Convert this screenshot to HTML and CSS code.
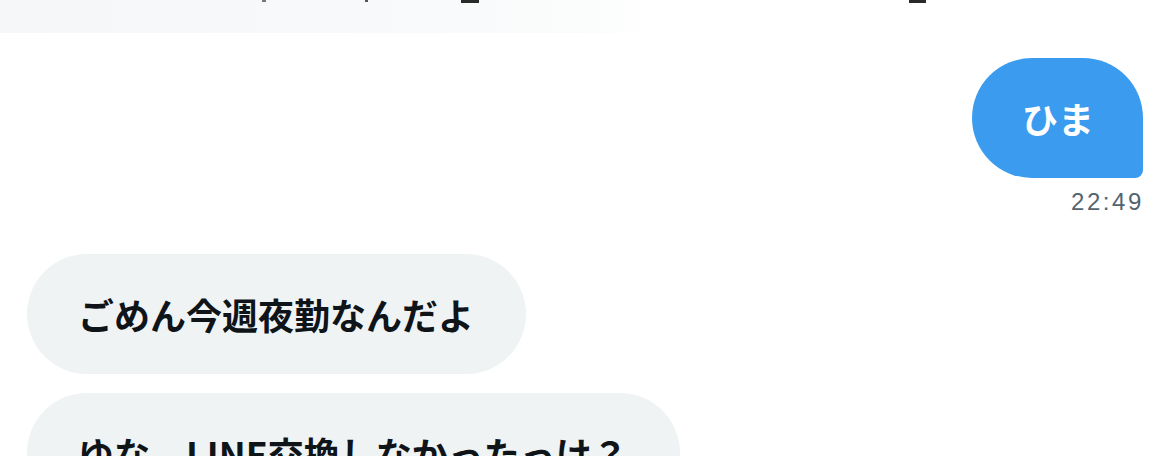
FILE: index.html
```html
<!DOCTYPE html>
<html lang="ja">
<head>
<meta charset="utf-8">
<link rel="stylesheet" href="styles.css">
</head>
<body>
<div class="screen">
  <div class="top">
    <div class="quoted"></div>
    <div class="marks">
      <i class="mark m1"></i><i class="mark m2"></i><i class="mark m3"></i><i class="mark m4"></i>
    </div>
  </div>
  <div class="thread">
    <div class="msg msg-out">
      <div class="bubble bubble-out">ひま</div>
      <div class="time">22:49</div>
    </div>
    <div class="msg msg-in">
      <div class="bubble bubble-in">ごめん今週夜勤なんだよ</div>
      <div class="bubble bubble-in">ゆな、LINE交換しなかったっけ？</div>
    </div>
  </div>
</div>
</body>
</html>
```
FILE: styles.css
```css
* { box-sizing: border-box; }
html, body { margin: 0; padding: 0; background: #ffffff; }
body {
  width: 1170px;
  height: 456px;
  overflow: hidden;
  font-family: "Noto Sans CJK JP", "Noto Sans", sans-serif;
}
.screen { display: flex; flex-direction: column; }
.top { position: relative; height: 33px; }
.quoted {
  height: 33px;
  width: 650px;
  background: linear-gradient(90deg, #f6f7f8 0%, #f8f9fa 60%, #fbfcfc 92%, #ffffff 100%);
}
.marks {
  position: absolute;
  top: 0;
  left: 0;
  display: flex;
  align-items: flex-start;
}
.mark { display: block; background: #2a2a2a; height: 3px; }
.m1 { margin-left: 262px; width: 4px; height: 2px; background: #777; }
.m2 { margin-left: 99px; width: 3px; height: 2px; background: #555; }
.m3 { margin-left: 93px; width: 18px; }
.m4 { margin-left: 430px; width: 17px; }
.thread {
  display: flex;
  flex-direction: column;
  padding: 25px 27px 0 27px;
}
.msg { display: flex; flex-direction: column; }
.msg-out { align-items: flex-end; }
.msg-in { align-items: flex-start; gap: 19px; margin-top: 38px; }
.bubble {
  font-size: 36px;
  font-weight: 700;
  line-height: 48px;
  padding: 36px 52px;
  white-space: nowrap;
}
.bubble-out {
  background: #3b9cef;
  color: #ffffff;
  border-radius: 60px 60px 8px 60px;
  padding-left: 50px;
  padding-right: 49px;
}
.bubble-in {
  background: #eff3f4;
  color: #0f1419;
  border-radius: 60px;
  padding-left: 51px;
  padding-right: 52px;
}
.time {
  margin-top: 10px;
  font-family: "Liberation Sans", sans-serif;
  font-size: 24px;
  line-height: 28px;
  letter-spacing: 2.6px;
  color: #536471;
  margin-right: -1px;
}
```
